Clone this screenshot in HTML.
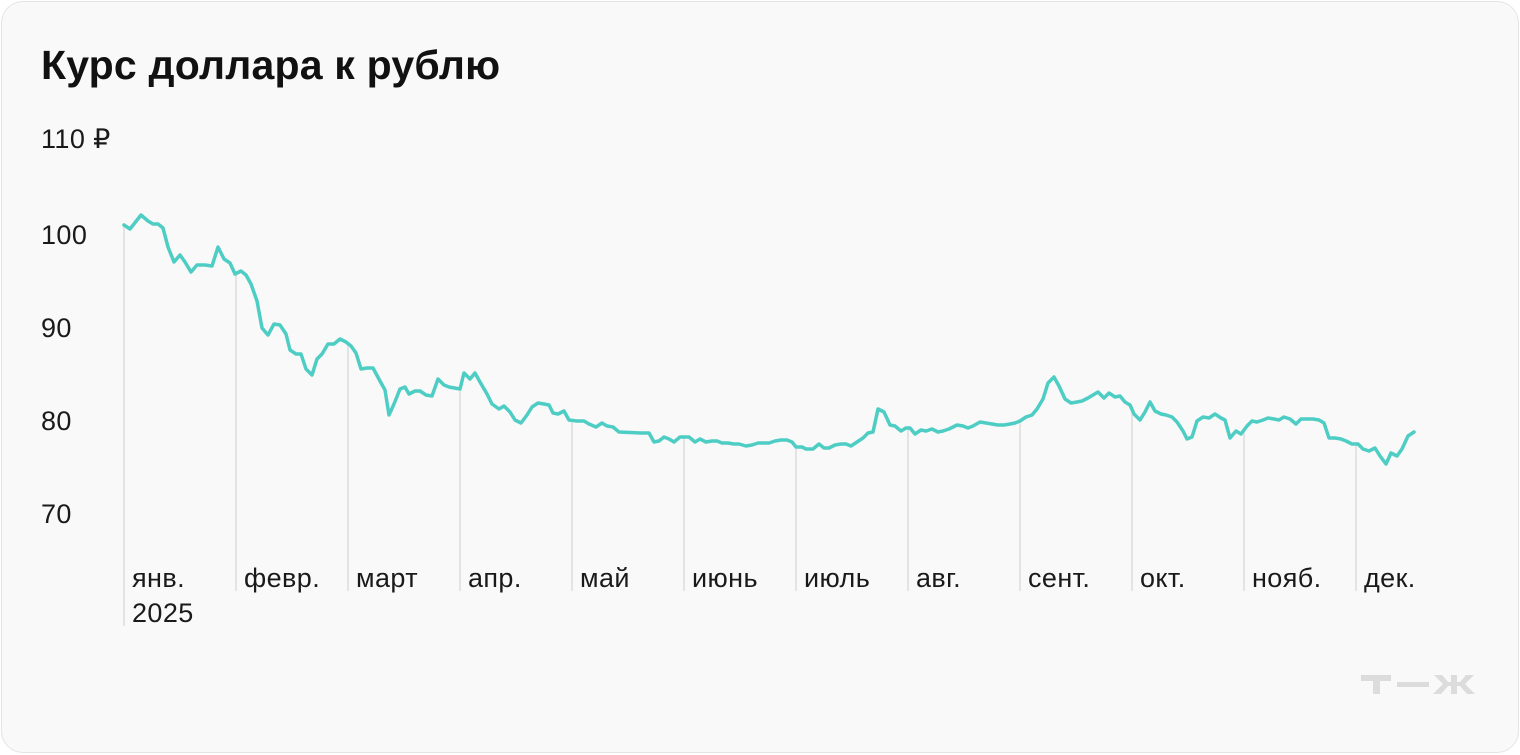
<!DOCTYPE html><html><head><meta charset="utf-8"><style>
html,body{margin:0;padding:0;background:#fff;}
.card{position:absolute;left:1px;top:1px;width:1516px;height:750px;border:1px solid #e4e4e4;border-radius:22px;background:#f9f9f9;font-family:"Liberation Sans",sans-serif;color:#111;}
h1{position:absolute;left:39px;top:40px;margin:0;font-size:41px;font-weight:700;letter-spacing:0.2px;}
.t{position:absolute;font-size:27px;color:#1a1a1a;letter-spacing:0.4px;}
</style></head><body><div class="card">
<h1>Курс доллара к рублю</h1>
<div class="t" style="left:39px;top:122px">110 ₽</div>
<div class="t" style="left:39px;top:218px">100</div>
<div class="t" style="left:39px;top:311px">90</div>
<div class="t" style="left:39px;top:404px">80</div>
<div class="t" style="left:39px;top:497px">70</div>
<svg width="1520" height="754" style="position:absolute;left:-1px;top:-1px">
<g stroke="#dddddd" stroke-width="1.5">
<line x1="123" y1="224" x2="123" y2="625"/><line x1="235" y1="273" x2="235" y2="590"/><line x1="347" y1="341" x2="347" y2="590"/><line x1="459" y1="388" x2="459" y2="590"/><line x1="571" y1="420" x2="571" y2="590"/><line x1="683" y1="436" x2="683" y2="590"/><line x1="795" y1="446" x2="795" y2="590"/><line x1="907" y1="427" x2="907" y2="590"/><line x1="1019" y1="420" x2="1019" y2="590"/><line x1="1131" y1="408" x2="1131" y2="590"/><line x1="1243" y1="430" x2="1243" y2="590"/><line x1="1355" y1="443" x2="1355" y2="590"/>
</g>
<polyline fill="none" stroke="#4ecdc4" stroke-width="3.5" stroke-linejoin="round" stroke-linecap="round" points="123,224 129,228 140,214 147,220 152,223 157,223 162,227 167,246 173,261 179,254 184,261 190,271 196,264 204,264 211,265 217,246 223,258 229,262 234,273 240,270 245,274 250,283 256,300 261,327 267,334 273,323 279,324 285,333 289,349 295,353 300,353 305,368 311,374 316,358 321,353 327,343 333,343 339,338 345,341 350,345 355,352 360,368 366,367 372,367 379,380 384,389 388,414 393,403 399,388 404,386 408,393 414,390 419,390 425,394 431,395 437,378 443,384 448,386 459,388 463,372 469,378 474,372 479,381 486,393 491,403 498,408 503,405 509,411 514,419 520,422 526,414 531,406 537,402 543,403 548,404 552,412 557,413 563,410 568,419 576,420 583,420 588,423 595,426 601,422 606,425 612,426 618,431 640,432 648,432 653,441 658,440 663,436 668,438 673,441 679,436 688,436 694,441 699,438 705,441 711,440 716,440 721,442 727,442 733,443 738,443 745,445 751,444 757,442 762,442 768,442 774,440 780,439 786,439 791,441 795,446 801,446 805,448 812,448 818,443 823,447 828,447 834,444 840,443 845,443 850,445 856,441 862,437 867,432 872,431 877,408 883,411 889,424 894,425 900,430 905,427 909,427 914,433 920,429 925,430 931,428 937,431 942,430 948,428 956,424 962,425 967,427 972,425 979,421 985,422 991,423 997,424 1003,424 1009,423 1014,422 1019,420 1025,416 1031,414 1036,408 1042,398 1047,382 1053,376 1058,385 1064,398 1070,402 1076,401 1081,400 1087,397 1092,394 1097,391 1103,397 1108,392 1114,396 1119,395 1124,401 1129,404 1133,413 1139,419 1144,411 1149,401 1154,410 1160,413 1165,414 1171,416 1176,421 1182,430 1186,438 1191,436 1196,420 1202,416 1208,417 1214,413 1220,417 1224,419 1229,437 1235,430 1240,433 1246,425 1251,420 1256,421 1262,419 1267,417 1273,418 1278,419 1283,416 1289,418 1295,423 1300,418 1306,418 1312,418 1318,419 1323,422 1328,437 1334,437 1340,438 1345,440 1351,443 1357,443 1362,448 1368,450 1374,447 1379,455 1385,463 1390,452 1396,455 1401,448 1407,435 1413,431"/>
<g fill="#dcdcdc"><rect x="1360" y="674" width="30" height="6"/><rect x="1372" y="674" width="7" height="19"/><rect x="1396" y="681" width="32" height="5"/>
<path d="M1433 674h8l6 7h3v-7h6v7h3l6-7h8l-9 9 10 10h-8l-7-8h-3v8h-6v-8h-3l-7 8h-8l10-10z"/></g>
</svg>
<div class="t" style="left:130px;top:561px">янв.</div>
<div class="t" style="left:130px;top:596px">2025</div>
<div class="t" style="left:242px;top:561px">февр.</div>
<div class="t" style="left:354px;top:561px">март</div>
<div class="t" style="left:466px;top:561px">апр.</div>
<div class="t" style="left:578px;top:561px">май</div>
<div class="t" style="left:690px;top:561px">июнь</div>
<div class="t" style="left:802px;top:561px">июль</div>
<div class="t" style="left:914px;top:561px">авг.</div>
<div class="t" style="left:1026px;top:561px">сент.</div>
<div class="t" style="left:1138px;top:561px">окт.</div>
<div class="t" style="left:1250px;top:561px">нояб.</div>
<div class="t" style="left:1362px;top:561px">дек.</div>
</div></body></html>
